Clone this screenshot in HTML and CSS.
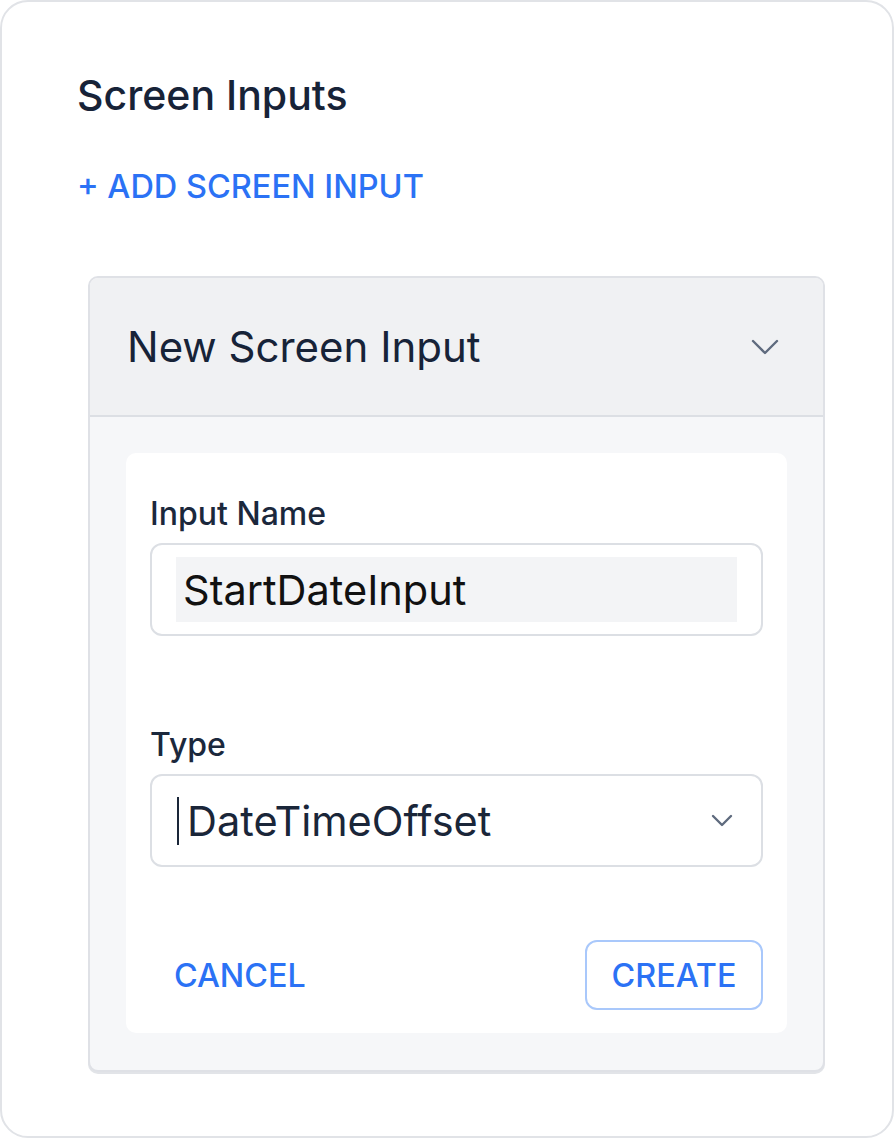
FILE: index.html
```html
<!DOCTYPE html>
<html>
<head>
<meta charset="utf-8">
<link rel="stylesheet" href="styles.css">
</head>
<body>
<div class="card">
  <h1 class="title">Screen Inputs</h1>
  <div class="add-link">+ ADD SCREEN INPUT</div>
  <div class="accordion">
    <div class="acc-header">
      <span class="acc-title">New Screen Input</span>
      <svg class="acc-chevron" width="28" height="18" viewBox="0 0 28 18"><path d="M2 3 L14 15 L26 3" fill="none" stroke="#5f6b7e" stroke-width="2.4" stroke-linecap="round" stroke-linejoin="round"/></svg>
    </div>
    <div class="acc-body">
      <div class="form">
        <div class="field">
          <label class="label">Input Name</label>
          <div class="input"><span class="input-fill">StartDateInput</span></div>
        </div>
        <div class="field field-type">
          <label class="label">Type</label>
          <div class="select">
            <span class="caret"></span>
            <span class="select-text">DateTimeOffset</span>
            <svg class="select-chevron" width="22" height="14" viewBox="0 0 22 14"><path d="M2 2 L11 11 L20 2" fill="none" stroke="#5f6b7e" stroke-width="2.4" stroke-linecap="round" stroke-linejoin="round"/></svg>
          </div>
        </div>
        <div class="actions">
          <button class="btn btn-text">CANCEL</button>
          <button class="btn btn-outline">CREATE</button>
        </div>
      </div>
    </div>
  </div>
</div>
</body>
</html>
```
FILE: styles.css
```css
* { box-sizing: border-box; }
html, body { margin: 0; padding: 0; background: #ffffff; }
body { font-family: Inter, "Noto Sans", sans-serif; color: #1a2639; }
.card {
  width: 894px;
  height: 1138px;
  border: 2px solid #e1e3e7;
  border-radius: 28px;
  padding: 68px 67px 0 75px;
  background: #fff;
}
.title {
  margin: 0;
  font-size: 41px;
  font-weight: 500;
  line-height: 50px;
  color: #172338;
}
.add-link {
  margin-top: 47px;
  font-size: 32.5px;
  line-height: 40px;
  color: #2b72f5;
  font-weight: 500;
}
.accordion {
  margin: 69px 0 0 11px;
  border: 2px solid #dfe1e6;
  border-radius: 10px;
  background: #f6f7f9;
  overflow: hidden;
  box-shadow: 0 2px 0 #e2e4e8;
}
.acc-header {
  height: 139px;
  background: #f0f1f3;
  border-bottom: 2px solid #dcdfe4;
  display: flex;
  align-items: center;
  justify-content: space-between;
  padding: 0 44px 0 37px;
}
.acc-title {
  font-size: 42px;
  font-weight: 400;
  color: #172338;
}
.acc-body {
  padding: 36px 36px 37px;
}
.form {
  background: #fff;
  border-radius: 10px;
  padding: 41px 24px 23px;
}
.label {
  display: block;
  font-size: 32px;
  line-height: 40px;
  color: #1b283c;
  font-weight: 500;
}
.input {
  margin-top: 9px;
  height: 93px;
  border: 2px solid #dcdfe4;
  border-radius: 12px;
  padding: 12px 24px;
}
.input-fill {
  display: flex;
  align-items: center;
  height: 65px;
  background: #f3f4f6;
  padding-left: 7px;
  font-size: 41.5px;
  color: #111;
}
.field-type { margin-top: 89px; }
.select {
  margin-top: 9px;
  height: 93px;
  border: 2px solid #dcdfe4;
  border-radius: 12px;
  display: flex;
  align-items: center;
  padding: 0 28px 0 25px;
}
.caret {
  width: 2px;
  height: 48px;
  background: #1a2639;
  margin-right: 8px;
}
.select-text {
  flex: 1;
  font-size: 41.5px;
  color: #1a2639;
}
.actions {
  margin-top: 73px;
  display: flex;
  justify-content: space-between;
  align-items: center;
}
.btn {
  font-family: Inter, "Noto Sans", sans-serif;
  font-size: 32.3px;
  font-weight: 500;
  color: #2b72f5;
  background: #fff;
  cursor: pointer;
}
.btn-text {
  border: none;
  padding: 0 24px;
  height: 70px;
}
.btn-outline {
  height: 70px;
  width: 178px;
  border: 2px solid #a9c8fb;
  border-radius: 12px;
  padding: 0;
}
```
